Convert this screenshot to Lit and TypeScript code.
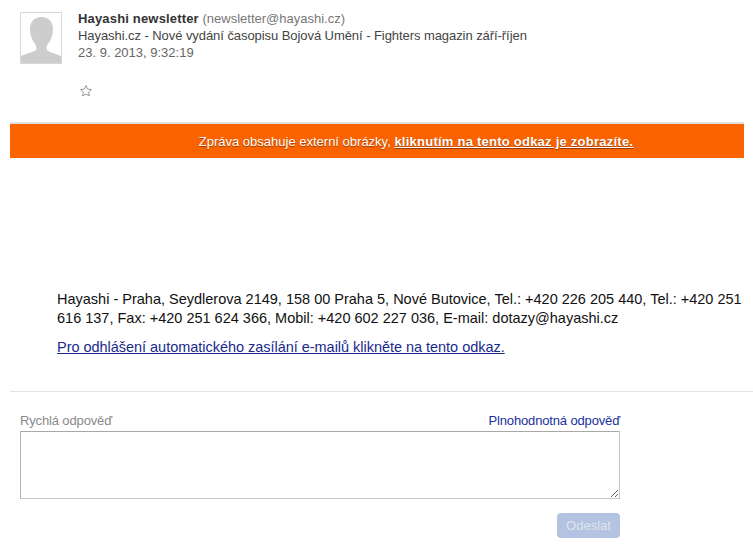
import { css, html, LitElement } from "lit";
import { customElement } from "lit/decorators.js";

@customElement("app-root")
export class AppRoot extends LitElement {
  render() {
    return html`
      <div class="header">
        <div class="avatar">
          <svg width="40" height="50" viewBox="0 0 40 50">
            <path
              fill="#cdcdcd"
              d="M20.5 4C13 4 9 9 9 16c0 6 2 11 5 15 1.500 2 2 4 1 6-2 2-8 3-15 6v7h40v-7c-7-3-13-4-14-6-1-2-.5-4 1-6 3-4 5-9 5-15 0-7-4-12-11.500-12z"
            />
          </svg>
        </div>
        <div class="meta">
          <div>
            <span class="name">Hayashi newsletter</span>
            <span class="email">(newsletter@hayashi.cz)</span>
          </div>
          <div class="subject">
            Hayashi.cz - Nové vydání časopisu Bojová Umění - Fighters magazin září-říjen
          </div>
          <div class="date">23. 9. 2013, 9:32:19</div>
          <svg class="star" width="14" height="14" viewBox="0 0 14 14">
            <path
              fill="#fff"
              stroke="#9a9a9a"
              d="M7 1.500l1.600 3.600 3.900.4-2.900 2.600.8 3.900L7 10l-3.400 2 .8-3.900L1.500 5.500l3.900-.4z"
            />
          </svg>
        </div>
      </div>
      <div class="rule"></div>
      <div class="banner">
        Zpráva obsahuje externí obrázky,
        <a href="#">kliknutím na tento odkaz je zobrazíte.</a>
      </div>
      <div class="body">
        <p>
          Hayashi - Praha, Seydlerova 2149, 158 00 Praha 5, Nové Butovice, Tel.: +420 226 205 440,
          Tel.: +420 251 616 137, Fax: +420 251 624 366, Mobil: +420 602 227 036, E-mail:
          dotazy@hayashi.cz
        </p>
        <a href="#">Pro odhlášení automatického zasílání e-mailů klikněte na tento odkaz.</a>
      </div>
      <div class="divider"></div>
      <div class="reply">
        <div class="reply-head">
          <span class="label">Rychlá odpověď</span>
          <a href="#">Plnohodnotná odpověď</a>
        </div>
        <textarea></textarea>
        <div class="actions"><button disabled>Odeslat</button></div>
      </div>
    `;
  }

  static styles = css`
    :host {
      display: block;
      width: 753px;
      height: 551px;
      overflow: hidden;
      background: #fff;
      font-family: "Liberation Sans", Arial, sans-serif;
      font-size: 13px;
      color: #444;
    }

    .header {
      display: flex;
      height: 110px;
      padding: 12px 0 0 20px;
      box-sizing: border-box;
    }

    .avatar {
      width: 42px;
      height: 52px;
      box-sizing: border-box;
      border: 1px solid #d8d8d8;
      overflow: hidden;
      margin-right: 16px;
    }

    .avatar svg {
      display: block;
    }

    .meta {
      line-height: 17px;
      margin-top: -2px;
    }

    .name {
      font-weight: bold;
      color: #333;
      letter-spacing: 0.17px;
    }

    .email {
      color: #777;
    }

    .subject {
      color: #444;
      letter-spacing: -0.065px;
    }

    .date {
      color: #666;
    }

    .star {
      display: block;
      margin: 23px 0 0 1px;
    }

    .rule {
      margin: 12px 9px 0 10px;
      height: 2px;
      background: #e2e2e2;
    }

    .banner {
      margin: 0 9px 0 10px;
      padding-left: 78px;
      height: 34px;
      line-height: 35px;
      background: #fb6200;
      color: #fff;
      text-align: center;
      text-shadow: 0 1px 1px rgba(0, 0, 0, 0.4);
    }

    .banner a {
      color: #fff;
      font-weight: bold;
      letter-spacing: 0.24px;
    }

    .body {
      padding: 132px 10px 0 57px;
      font-size: 14.5px;
      line-height: 19px;
      color: #111;
    }

    .body p {
      margin: 0 0 10px;
    }

    .body a {
      color: #1a2a8c;
      letter-spacing: -0.03px;
    }

    .divider {
      margin: 34px 0 0 10px;
      height: 1px;
      background: #e2e2e2;
    }

    .reply {
      width: 600px;
      margin: 21px 0 0 20px;
    }

    .reply-head {
      display: flex;
      justify-content: space-between;
      line-height: 16px;
      height: 18px;
    }

    .label {
      color: #8a8a8a;
      letter-spacing: -0.14px;
    }

    .reply-head a {
      color: #1a2fa0;
      text-decoration: none;
      letter-spacing: -0.15px;
    }

    textarea {
      display: block;
      width: 600px;
      height: 68px;
      box-sizing: border-box;
      margin: 0;
      border: 1px solid #c6c6c6;
      border-top-color: #a8a8a8;
      border-left-color: #b4b4b4;
      outline: none;
      background: #fff;
    }

    .actions {
      display: flex;
      justify-content: flex-end;
      margin-top: 14px;
    }

    button {
      width: 63px;
      height: 25px;
      padding: 0;
      border: none;
      border-radius: 4px;
      background: #b3c3e1;
      color: #dfe3ea;
      font: 13px "Liberation Sans", Arial, sans-serif;
    }
  `;
}
